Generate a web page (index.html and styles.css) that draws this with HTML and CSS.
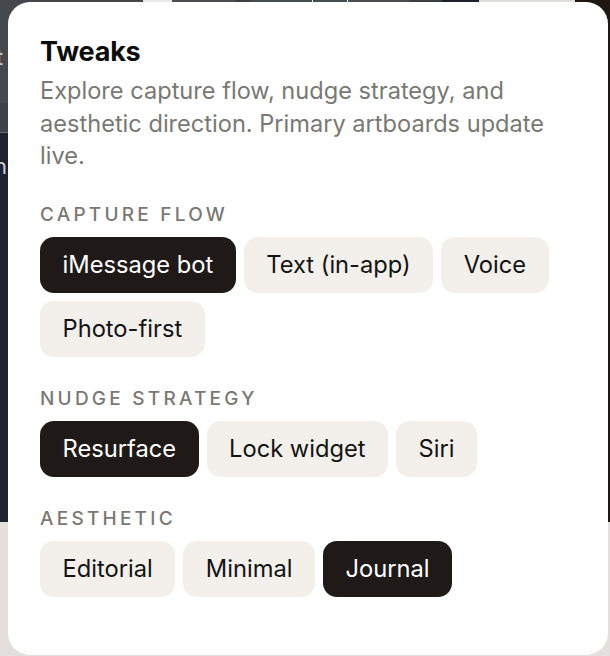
FILE: index.html
```html
<!DOCTYPE html>
<html lang="en">
<head>
<meta charset="utf-8">
<title>Tweaks</title>
<link rel="stylesheet" href="styles.css">
</head>
<body>
<div class="stage">
  <div class="backdrop">
    <div class="bd-left">
      <div class="bd-l1"><span class="bd-char">t</span></div>
      <div class="bd-l2"></div>
      <div class="bd-l3"><span class="bd-char">n</span></div>
      <div class="bd-l4"></div>
    </div>
    <div class="bd-mid">
      <div class="bd-top">
        <div class="seg s1"></div>
        <div class="seg s2"></div>
        <div class="seg s3"></div>
        <div class="seg s4"></div>
        <div class="seg s5"></div>
        <div class="seg s6"></div>
        <div class="seg s7"></div>
        <div class="seg s8"></div>
        <div class="seg s9"></div>
        <div class="seg s10"></div>
        <div class="seg s11"></div>
        <div class="seg s12"></div>
        <div class="seg s13"></div>
      </div>
      <div class="bd-body"></div>
      <div class="bd-bottom"></div>
    </div>
    <div class="bd-right">
      <div class="bd-r1"></div>
      <div class="bd-r2"></div>
    </div>
  </div>

  <section class="panel">
    <h1 class="title">Tweaks</h1>
    <p class="desc">Explore capture flow, nudge strategy, and aesthetic direction. Primary artboards update live.</p>

    <div class="group">
      <h2 class="label">Capture flow</h2>
      <div class="chips">
        <button class="chip is-on">iMessage bot</button>
        <button class="chip">Text (in-app)</button>
        <button class="chip">Voice</button>
        <button class="chip">Photo-first</button>
      </div>
    </div>

    <div class="group">
      <h2 class="label">Nudge strategy</h2>
      <div class="chips">
        <button class="chip is-on">Resurface</button>
        <button class="chip">Lock widget</button>
        <button class="chip">Siri</button>
      </div>
    </div>

    <div class="group">
      <h2 class="label">Aesthetic</h2>
      <div class="chips">
        <button class="chip">Editorial</button>
        <button class="chip">Minimal</button>
        <button class="chip is-on">Journal</button>
      </div>
    </div>
  </section>
</div>
</body>
</html>
```

FILE: styles.css
```css
* { box-sizing: border-box; }

html, body {
  margin: 0;
  padding: 0;
  width: 610px;
  height: 656px;
  overflow: hidden;
  font-family: Inter, "Noto Sans", "Liberation Sans", sans-serif;
}

.stage {
  position: relative;
  width: 610px;
  height: 656px;
}

/* ---------- backdrop (content behind the popover) ---------- */
.backdrop {
  display: flex;
  width: 610px;
  height: 656px;
}

.bd-left {
  width: 40px;
  display: flex;
  flex-direction: column;
}
.bd-l1 { height: 103px; background: #45484d; }
.bd-l2 { height: 30px; background: #3e4145; border-bottom: 1px solid #6b6e72; }
.bd-l3 { height: 389px; background: #1e2230; }
.bd-l4 { flex: 1; background: #e1e0dc; }

.bd-char {
  display: block;
  color: #c9cacc;
  font-size: 22px;
  line-height: 1;
  margin-left: -4px;
}
.bd-l1 .bd-char { padding-top: 46px; }
.bd-l3 .bd-char { padding-top: 22px; margin-left: -6px; }

.bd-mid {
  flex: 1;
  display: flex;
  flex-direction: column;
}
.bd-top { height: 30px; display: flex; }
.seg { height: 100%; }
.s1  { width: 108px; background: #45474b; }
.s2  { width: 29px;  background: #e8e8e8; }
.s3  { width: 63px;  background: #4a4d52; }
.s4  { width: 16px;  background: #3d4044; }
.s5  { width: 61px;  background: #484b50; }
.s6  { width: 1px;   background: #f0f0f0; }
.s7  { width: 34px;  background: #484b50; }
.s8  { width: 1px;   background: #f0f0f0; }
.s9  { width: 61px;  background: #4a4d52; }
.s10 { width: 33px;  background: #3a3d42; }
.s11 { width: 37px;  background: #1e2130; }
.s12 { width: 96px;  background: #e0dfdb; }
.s13 { flex: 1;      background: #1f1712; }
.bd-body { flex: 1; background: #1e2230; }
.bd-bottom { height: 30px; background: #e1e0dc; }

.bd-right {
  width: 40px;
  display: flex;
  flex-direction: column;
}
.bd-r1 { height: 522px; background: #1f1712; }
.bd-r2 { flex: 1; background: #e1e0dc; }

/* ---------- popover panel ---------- */
.panel {
  position: absolute;
  left: 8px;
  top: 2px;
  width: 600px;
  height: 653px;
  background: #ffffff;
  border-radius: 22px;
  padding: 33px 32px 0 32px;
  color: #111111;
}

.title {
  margin: 0;
  font-size: 27px;
  line-height: 34px;
  font-weight: 700;
  letter-spacing: -0.2px;
  color: #0d0d0d;
}

.desc {
  margin: 6px 0 0 0;
  font-size: 23.6px;
  line-height: 32.5px;
  color: #7a7873;
  max-width: 530px;
}

.group {
  margin-top: 30px;
}
.group + .group {
  margin-top: 30px;
}

.label {
  margin: 0 0 10px 0;
  font-size: 19px;
  line-height: 24px;
  font-weight: 500;
  letter-spacing: 0.17em;
  text-transform: uppercase;
  color: #7b7873;
}

.chips {
  display: flex;
  flex-wrap: wrap;
  gap: 8px;
}

.chip {
  height: 56px;
  padding: 0 22.5px;
  border: none;
  border-radius: 14px;
  background: #f3f0eb;
  color: #141414;
  font-family: inherit;
  font-size: 23.7px;
  font-weight: 400;
  line-height: 56px;
}

.chip.is-on {
  background: #1f1a17;
  color: #ffffff;
}
```
